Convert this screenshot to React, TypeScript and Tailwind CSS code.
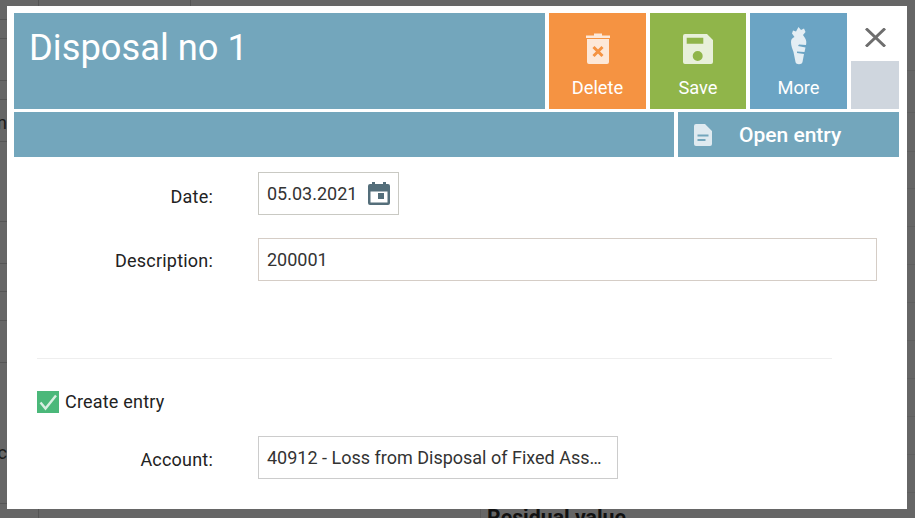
import type { ReactNode } from 'react';

const ROBOTO = 'font-["Roboto","Liberation_Sans",sans-serif]';

// row heights of the table that shows at both sides of the dialog
const LEFT_ROWS: { h: number; text?: string; cls?: string }[] = [
  { h: 20 },
  { h: 19 },
  { h: 42 },
  { h: 19 },
  { h: 42, text: 'n', cls: 'pt-[4px]' },
  { h: 80 },
  { h: 42 },
  { h: 28 },
  { h: 29 },
  { h: 42 },
  { h: 141, text: 'c', cls: 'pt-[38px]' },
];
const RIGHT_ROWS = [71, 42, 39, 37, 38, 38, 38, 38, 38, 38, 38, 38];

function TrashIcon() {
  return (
    <svg viewBox="0 0 24 31" className="h-[31px] w-[24px]">
      <path fill="#fde8d8" d="M0 2.5h8V.5h8v2h8V5H0zM1 6h22v23a2 2 0 0 1-2 2H3a2 2 0 0 1-2-2z" />
      <path stroke="#f59342" strokeWidth="3" d="M7.5 14l9 9M16.5 14l-9 9" />
    </svg>
  );
}

function SaveIcon() {
  return (
    <svg viewBox="0 0 30 30" className="h-[30px] w-[30px]">
      <path
        fill="#e8f0da"
        fillRule="evenodd"
        d="M2 0h22l6 6v22a2 2 0 0 1-2 2H2a2 2 0 0 1-2-2V2a2 2 0 0 1 2-2zM3.700 3.700v6h16.600v-6zM14.700 17a5 5 0 1 0 0 10 5 5 0 0 0 0-10z"
      />
    </svg>
  );
}

function CarrotIcon() {
  return (
    <svg viewBox="0 0 16 38" className="mb-[-1px] h-[38px] w-[16px]">
      <path
        fill="#e4eef4"
        d="M7.500 0L10 3l3-1.500L14.500 5 12 8l2 3c1.500 2 1.500 5 1 7l-7-.5-1 1.500 7.500 1.500-1 4.500-7.500-.5v1.500l7 1-1.500 8c-.5 3-6.500 3-7 0l-2-10C1.500 22 0 19 0 15c0-3 1.500-4 3.500-5L1 6.500l1-3 3 1z"
      />
    </svg>
  );
}

function CalendarIcon() {
  return (
    <svg viewBox="0 0 22 23" className="h-[23px] w-[22px]">
      <path
        fill="#546e7a"
        fillRule="evenodd"
        d="M4 0h3v2h8V0h3v2h2a2 2 0 0 1 2 2v17a2 2 0 0 1-2 2H2a2 2 0 0 1-2-2V4a2 2 0 0 1 2-2h2zM2.500 9.500V20.500h17V9.500zM10 11h6v6h-6z"
      />
    </svg>
  );
}

function FileIcon() {
  return (
    <svg viewBox="0 0 18 22" className="h-[22px] w-[18px]">
      <path
        fill="#dfeaf0"
        fillRule="evenodd"
        d="M2 0h9l7 7v13a2 2 0 0 1-2 2H2a2 2 0 0 1-2-2V2a2 2 0 0 1 2-2zM3.500 10.500v2h11v-2zM3.500 15v2h8v-2z"
      />
    </svg>
  );
}

function CloseIcon() {
  return (
    <svg viewBox="0 0 21 19" className="h-[19px] w-[21px]">
      <path d="M1 .5l19 18M20 .5l-19 18" fill="none" stroke="#6e6e6e" strokeWidth="3" />
    </svg>
  );
}

function ActionTile({ label, color, icon }: { label: string; color: string; icon: ReactNode }) {
  return (
    <div className={`flex h-[96px] flex-col items-center text-white ${color}`}>
      <div className="flex h-[51px] items-end">{icon}</div>
      <span className="mt-[12px] text-[18.300px] leading-[24px]">{label}</span>
    </div>
  );
}

export default function App() {
  return (
    <div className={`relative h-[518px] w-[915px] overflow-hidden bg-[#666666] ${ROBOTO}`}>
      {/* page behind the dialog */}
      <div className="flex h-full">
        <div className="w-[39px] border-r border-[#555555]">
          {LEFT_ROWS.map((row, i) => (
            <div
              key={i}
              className={`box-border flex w-[7px] items-center justify-end overflow-hidden border-b border-[#555555] text-[18px] text-[#1a1a1a] ${row.cls ?? ''}`}
              style={{ height: row.h }}
            >
              {row.text}
            </div>
          ))}
        </div>
        <div className="flex flex-1 flex-col justify-between">
          <div className="ml-[151px] h-[6px] w-[1px] bg-[#555555]" />
          <div className="ml-[441px] h-[9px] overflow-visible border-l border-[#5a5a5a] pl-[6px] text-[21.300px] font-bold leading-[18px] text-[#111111]">
            Residual value
          </div>
        </div>
        <div className="w-[8px]">
          {RIGHT_ROWS.map((h, i) => (
            <div key={i} className="box-border border-b border-[#5f5f5f]" style={{ height: h }} />
          ))}
        </div>
      </div>

      <div className="absolute left-[7px] top-[6px] h-[503px] w-[900px] bg-white pl-[7px] pr-[8px] pt-[7px]">
        <div className="flex gap-[4px]">
          <div className="h-[96px] w-[531px] bg-[#73a6bc] pl-[15px] pt-[12px] text-[36.300px] leading-[46px] text-white">
            Disposal no 1
          </div>
          <div className="w-[97px]">
            <ActionTile label="Delete" color="bg-[#f59342]" icon={<TrashIcon />} />
          </div>
          <div className="w-[96px]">
            <ActionTile label="Save" color="bg-[#90b54a]" icon={<SaveIcon />} />
          </div>
          <div className="w-[97px]">
            <ActionTile label="More" color="bg-[#6ba4c4]" icon={<CarrotIcon />} />
          </div>
          <div className="flex w-[48px] flex-col items-center">
            <div className="flex h-[48px] items-center justify-center">
              <CloseIcon />
            </div>
            <div className="h-[48px] w-full bg-[#cfd6de]" />
          </div>
        </div>

        <div className="mt-[3px] flex gap-[4px]">
          <div className="h-[45px] w-[660px] bg-[#73a6bc]" />
          <div className="flex h-[45px] w-[221px] items-center bg-[#73a6bc] pl-[16px] text-white">
            <FileIcon />
            <span className="ml-[27px] text-[21px] font-medium leading-[26px]">Open entry</span>
          </div>
        </div>

        <div className="mt-[15px] flex items-center text-[18px] text-[#222222]">
          <label className="w-[199px] pt-[5px] text-right tracking-[0.2px]">Date:</label>
          <div className="ml-[45px] flex h-[43px] w-[141px] items-center border border-[#c9c9c3] pl-[8px]">
            <span className="text-[#333333]">05.03.2021</span>
            <span className="ml-[11px] flex"><CalendarIcon /></span>
          </div>
        </div>

        <div className="mt-[23px] flex items-center text-[18px] text-[#222222]">
          <label className="w-[199px] pt-[2px] text-right tracking-[0.2px]">Description:</label>
          <div className="ml-[45px] flex h-[43px] w-[619px] items-center border border-[#d5cdc6] pl-[8px] text-[#333333]">
            200001
          </div>
        </div>

        <div className="ml-[23px] mt-[77px] h-px w-[795px] bg-[#eeeeee]" />

        <div className="ml-[23px] mt-[32px] flex h-[22px] items-center text-[18px] text-[#222222]">
          <span className="flex h-[22px] w-[22px] items-center justify-center bg-[#4bb87a]">
            <svg viewBox="0 0 22 22" className="h-[22px] w-[22px]">
              <path d="M3.500 11.500l5 6L19 4.500" fill="none" stroke="#d8efe2" strokeWidth="2.400" />
            </svg>
          </span>
          <span className="ml-[6px] pb-[2px] tracking-[0.2px]">Create entry</span>
        </div>

        <div className="mt-[23px] flex items-center text-[18px] text-[#222222]">
          <label className="w-[199px] pt-[4px] text-right tracking-[0.2px]">Account:</label>
          <div className="ml-[45px] flex h-[43px] w-[360px] items-center border border-[#cccccc] px-[8px] text-[#333333]">
            <span className="whitespace-nowrap">40912 - Loss from Disposal of Fixed Ass…</span>
          </div>
        </div>
      </div>
    </div>
  );
}
